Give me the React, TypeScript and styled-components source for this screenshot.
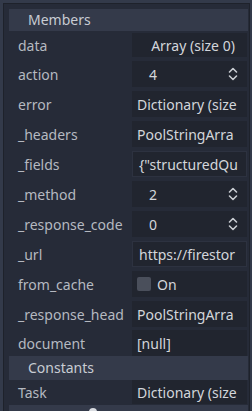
import React from "react";
import styled, { createGlobalStyle } from "styled-components";

const Global = createGlobalStyle`
  html, body { margin: 0; padding: 0; background: #333a4a; }
  body { font-family: "Noto Sans", "DejaVu Sans", sans-serif; font-size: 14px; }
  #root { width: 252px; height: 411px; overflow: hidden; }
`;

const Frame = styled.div`
  width: 252px;
  height: 411px;
  box-sizing: border-box;
  padding: 3px 2px 0 3px;
  background: #333a4a;
  overflow: hidden;
`;

const Panel = styled.div`
  height: 100%;
  box-sizing: border-box;
  border: 1px solid #1e222b;
  border-bottom: none;
  background: #262b38;
  padding: 5px 1px 0 5px;
  display: flex;
  flex-direction: column;
  overflow: hidden;
`;

const SectionHeader = styled.div<{ $h?: number }>`
  height: ${(p) => p.$h ?? 22}px;
  flex-shrink: 0;
  background: #343a4a;
  color: #c8ccd3;
  display: flex;
  align-items: center;
  padding-left: 19px;
  line-height: 1;
`;

const Row = styled.div<{ $mt?: number; $h?: number }>`
  display: grid;
  grid-template-columns: 123px 115px;
  align-items: center;
  height: ${(p) => p.$h ?? 26}px;
  margin-top: ${(p) => p.$mt ?? 4}px;
  flex-shrink: 0;
`;

const Label = styled.div`
  color: #b5b9c0;
  padding-left: 9px;
  white-space: nowrap;
  overflow: hidden;
  min-width: 0;
`;

const Value = styled.div<{ $variant?: "button" | "edit" | "spin" | "plain" | "check" }>`
  height: 100%;
  min-width: 0;
  box-sizing: border-box;
  background: #21252f;
  color: #d3d6db;
  display: flex;
  align-items: center;
  white-space: nowrap;
  overflow: hidden;
  position: relative;
  justify-content: ${(p) => (p.$variant === "button" ? "center" : "flex-start")};
  padding-left: ${(p) =>
    p.$variant === "spin" ? 17 : p.$variant === "plain" ? 5 : p.$variant === "check" ? 5 : p.$variant === "edit" ? 6 : 7}px;
  border: ${(p) => (p.$variant === "edit" ? "1px solid #2d3240" : "none")};
`;

const SpinIcon = styled.svg`
  position: absolute;
  right: 9px;
  top: 50%;
  transform: translateY(-50%);
`;

const Check = styled.span`
  width: 14px;
  height: 14px;
  border-radius: 2px;
  background: #4a4f5b;
  margin-right: 6px;
  flex-shrink: 0;
`;

const BottomBar = styled.div`
  margin-top: 1px;
  height: 8px;
  background: #343a4a;
  position: relative;
  flex-shrink: 0;
`;

const BottomIcon = styled.span`
  position: absolute;
  left: 80px;
  top: 3px;
  width: 8px;
  height: 8px;
  border-radius: 50%;
  background: #d8dbe0;
`;

const Spinner = () => (
  <SpinIcon width="10" height="16" viewBox="0 0 10 16" fill="none">
    <path d="M1.5 6 L5 2.5 L8.5 6" stroke="#c9ccd2" strokeWidth="1.6" strokeLinecap="round" strokeLinejoin="round" />
    <path d="M1.5 10 L5 13.5 L8.5 10" stroke="#c9ccd2" strokeWidth="1.6" strokeLinecap="round" strokeLinejoin="round" />
  </SpinIcon>
);

type Prop = {
  name: string;
  value: string;
  variant: "button" | "edit" | "spin" | "plain" | "check";
};

const members: Prop[] = [
  { name: "action", value: "4", variant: "spin" },
  { name: "error", value: "Dictionary (size", variant: "plain" },
  { name: "_headers", value: "PoolStringArra", variant: "plain" },
  { name: "_fields", value: '{"structuredQu', variant: "edit" },
  { name: "_method", value: "2", variant: "spin" },
  { name: "_response_code", value: "0", variant: "spin" },
  { name: "_url", value: "https://firestor", variant: "edit" },
  { name: "from_cache", value: "On", variant: "check" },
  { name: "_response_head", value: "PoolStringArra", variant: "plain" },
];

const PropValue = ({ p }: { p: Prop }) => (
  <Value $variant={p.variant}>
    {p.variant === "check" && <Check />}
    {p.value}
    {p.variant === "spin" && <Spinner />}
  </Value>
);

export default function App() {
  return (
    <>
      <Global />
      <Frame>
        <Panel>
          <SectionHeader>Members</SectionHeader>
          <Row $mt={2} $h={24}>
            <Label>data</Label>
            <Value $variant="button">Array (size 0)</Value>
          </Row>
          {members.map((p) => (
            <Row key={p.name}>
              <Label>{p.name}</Label>
              <PropValue p={p} />
            </Row>
          ))}
          <Row $mt={3}>
            <Label>document</Label>
            <Value $variant="plain">[null]</Value>
          </Row>
          <SectionHeader $h={24}>Constants</SectionHeader>
          <Row $mt={0} $h={24}>
            <Label>Task</Label>
            <Value $variant="plain">Dictionary (size</Value>
          </Row>
          <BottomBar>
            <BottomIcon />
          </BottomBar>
        </Panel>
      </Frame>
    </>
  );
}
